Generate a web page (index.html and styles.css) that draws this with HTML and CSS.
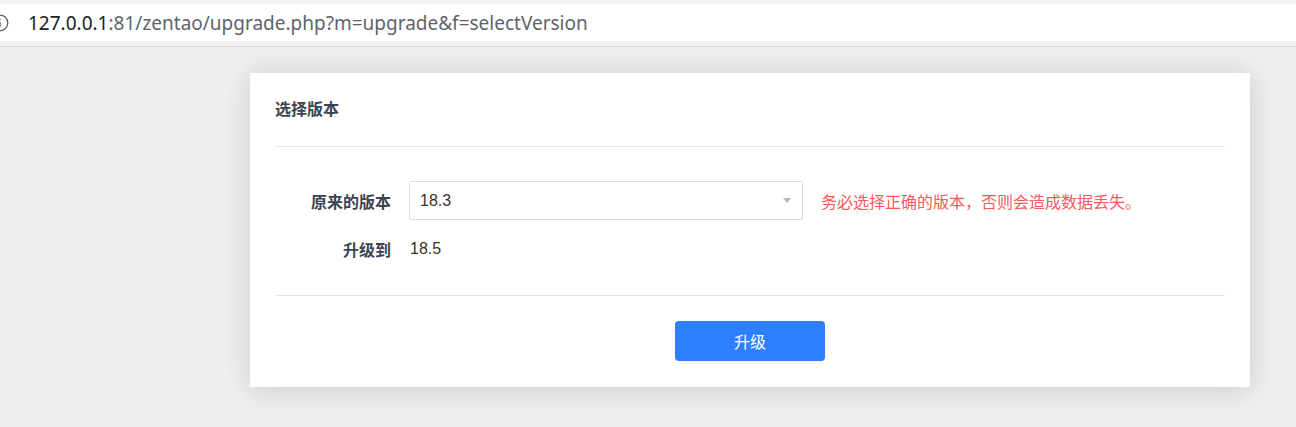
FILE: index.html
```html
<!DOCTYPE html>
<html lang="zh-CN">
<head>
<meta charset="utf-8">
<title>选择版本</title>
<link rel="stylesheet" href="styles.css">
</head>
<body>
<div class="topbar">
  <div class="address">
    <svg class="info-icon" width="18" height="18" viewBox="0 0 18 18"><circle cx="9" cy="9" r="7.8" fill="none" stroke="#5f6368" stroke-width="1.3"/><rect x="8.35" y="8" width="1.3" height="5" fill="#5f6368"/><rect x="8.35" y="5" width="1.3" height="1.4" fill="#5f6368"/></svg>
    <span class="url"><span class="host">127.0.0.1</span>:81/zentao/upgrade.php?m=upgrade&amp;f=selectVersion</span>
  </div>
</div>
<main class="page">
  <section class="card">
    <header class="card-header">选择版本</header>
    <div class="card-body">
      <div class="form-grid">
        <div class="label">原来的版本</div>
        <div class="select"><span>18.3</span><span class="caret"></span></div>
        <div class="warn">务必选择正确的版本，否则会造成数据丢失。</div>
        <div class="label">升级到</div>
        <div class="value">18.5</div>
      </div>
    </div>
    <footer class="card-footer">
      <button class="btn-primary" type="button">升级</button>
    </footer>
  </section>
</main>
</body>
</html>
```
FILE: styles.css
```css
html, body {
  margin: 0;
  padding: 0;
}
body {
  background: #efefef;
  font-family: "Liberation Sans", "Noto Sans CJK SC", sans-serif;
  font-size: 16px;
  color: #3c4353;
  height: 427px;
  overflow: hidden;
}
.topbar {
  background: #f3f3f3;
  padding: 4px 0 5px;
  border-bottom: 1px solid #d6d6d6;
}
.address {
  height: 37px;
  background: #fff;
  display: flex;
  align-items: center;
}
.info-icon {
  margin-left: -9px;
  margin-right: 19px;
  flex: none;
}
.url {
  font-family: "Noto Sans", "Liberation Sans", sans-serif;
  font-size: 19px;
  color: #5f6368;
  letter-spacing: 0;
}
.host {
  color: #202124;
}
.page {
  padding: 26px 0 0 250px;
}
.card {
  width: 1000px;
  background: #fff;
  box-shadow: 0 2px 28px rgba(0, 0, 0, 0.16);
  padding: 0 25px;
  box-sizing: border-box;
}
.card-header {
  height: 74px;
  padding-bottom: 4px;
  box-sizing: border-box;
  display: flex;
  align-items: center;
  font-weight: bold;
  font-size: 16px;
  color: #3c4353;
  border-bottom: 1px solid #e5e5e5;
}
.card-body {
  padding: 34px 0 31px;
  border-bottom: 1px solid #e5e5e5;
}
.form-grid {
  display: grid;
  grid-template-columns: 116px 394px auto;
  column-gap: 18px;
  row-gap: 14px;
  align-items: center;
}
.label {
  text-align: right;
  font-weight: bold;
  color: #3c4353;
}
.select {
  height: 39px;
  border: 1px solid #dcdcdc;
  border-radius: 2px;
  box-sizing: border-box;
  display: flex;
  align-items: center;
  justify-content: space-between;
  padding: 0 11px 0 10px;
  color: #333;
}
.caret {
  width: 0;
  height: 0;
  border-left: 4.5px solid transparent;
  border-right: 4.5px solid transparent;
  border-top: 5px solid #b4b9c2;
}
.warn {
  color: #f75a5a;
}
.value {
  height: 30px;
  line-height: 30px;
  padding-left: 1px;
  color: #333;
}
.card-footer {
  display: flex;
  justify-content: center;
  padding: 25px 0 26px;
}
.btn-primary {
  width: 150px;
  height: 40px;
  border: 0;
  border-radius: 4px;
  background: #2e7fff;
  color: #fff;
  font-family: "Noto Sans CJK SC", sans-serif;
  font-size: 16px;
}
```
